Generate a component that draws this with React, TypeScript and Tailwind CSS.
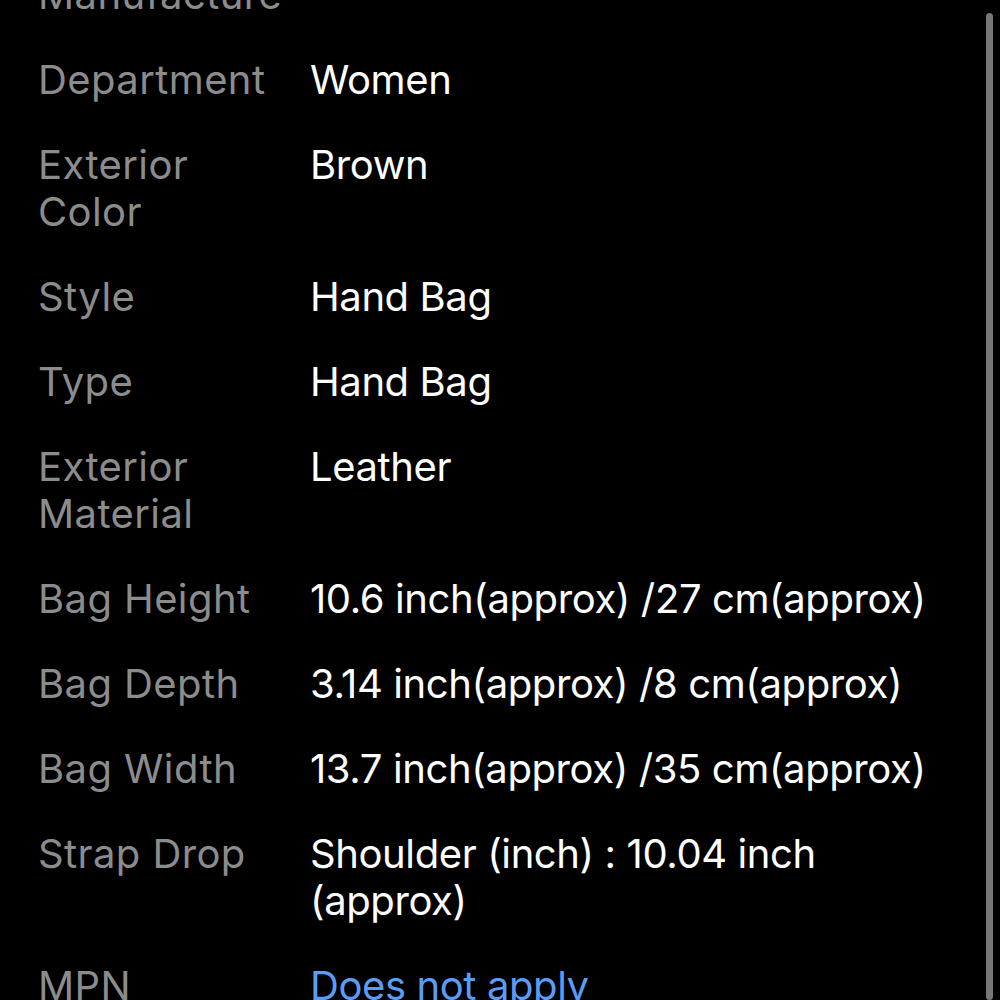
const specs = [
  { label: "Manufacture", value: "" },
  { label: "Department", value: "Women" },
  { label: "Exterior Color", value: "Brown" },
  { label: "Style", value: "Hand Bag" },
  { label: "Type", value: "Hand Bag" },
  { label: "Exterior Material", value: "Leather" },
  { label: "Bag Height", value: "10.6 inch(approx) /27 cm(approx)" },
  { label: "Bag Depth", value: "3.14 inch(approx) /8 cm(approx)" },
  { label: "Bag Width", value: "13.7 inch(approx) /35 cm(approx)" },
  { label: "Strap Drop", value: "Shoulder (inch) : 10.04 inch (approx)" },
  { label: "MPN", value: "Does not apply", link: true },
];

const App = () => {
  return (
    <div className="relative h-[1000px] w-[1000px] overflow-hidden bg-black font-['Inter','Noto_Sans',sans-serif]">
      <div className="-mt-[29px] flex flex-col gap-[38px] pl-[38px] pr-[50px]">
        {specs.map((row) => (
          <div key={row.label} className="flex gap-[32px] text-[40px] leading-[47px]">
            <div className="w-[240px] shrink-0 tracking-[0.4px] text-[#8c8c8c]">{row.label}</div>
            <div
              className={
                row.link
                  ? "flex-1 tracking-[-0.4px] text-[#5b9cf6]"
                  : "flex-1 tracking-[-0.4px] text-white"
              }
            >
              {row.value}
            </div>
          </div>
        ))}
      </div>
      {/* scroll indicator */}
      <div className="absolute right-[7px] top-[13px] bottom-0 w-[7px] rounded-full bg-[#777777]" />
    </div>
  );
};

export default App;
